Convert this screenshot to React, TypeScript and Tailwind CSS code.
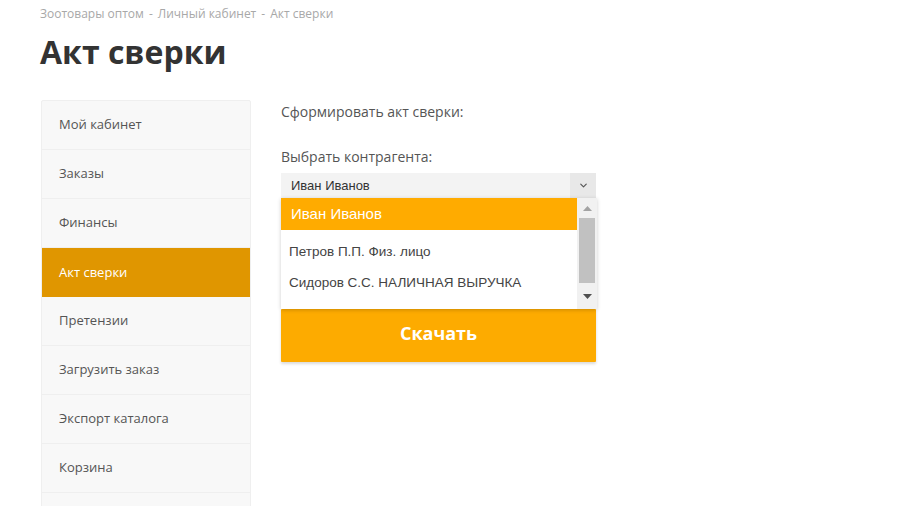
import { ChevronDown } from "lucide-react";

const menu = [
  "Мой кабинет",
  "Заказы",
  "Финансы",
  "Акт сверки",
  "Претензии",
  "Загрузить заказ",
  "Экспорт каталога",
  "Корзина",
  "",
];

const options = ["Петров П.П. Физ. лицо", "Сидоров С.С. НАЛИЧНАЯ ВЫРУЧКА"];

export default function App() {
  return (
    <main className="h-[506px] overflow-hidden bg-white font-['Open_Sans',sans-serif]">
      <div className="px-[40px]">
        {/* Breadcrumbs */}
        <div className="pt-[5px] text-[12px] leading-[18px] text-[#a8a8a8]">
          Зоотовары оптом<span className="mx-[5px]">-</span>Личный кабинет
          <span className="mx-[5px]">-</span>Акт сверки
        </div>
        <h1 className="mt-[9px] text-[32px] font-bold leading-[40px] text-[#333]">Акт сверки</h1>

        <div className="mt-[28px] flex gap-[30px]">
          {/* Sidebar */}
          <aside className="ml-[1px] w-[210px] shrink-0 rounded-[2px] border border-[#efefef] bg-[#f8f8f8]">
            {menu.map((item, i) =>
              item === "Акт сверки" ? (
                <div
                  key={i}
                  className="flex h-[49px] items-center bg-[#e09600] px-[17px] text-[13px] text-white"
                >
                  {item}
                </div>
              ) : (
                <div
                  key={i}
                  className="flex h-[49px] items-center border-b border-[#efefef] px-[17px] text-[13px] text-[#555]"
                >
                  {item}
                </div>
              )
            )}
          </aside>

          {/* Content */}
          <section className="w-[316px]">
            <p className="mt-[2px] text-[14px] leading-[20px] text-[#555]">Сформировать акт сверки:</p>
            <p className="mt-[25px] text-[14px] leading-[20px] text-[#555]">Выбрать контрагента:</p>

            <div className="relative mt-[6px]">
              <div className="flex h-[25px] w-[315px] items-center bg-[#f3f3f3] font-['Liberation_Sans',Arial,sans-serif] text-[13px] text-[#333]">
                <span className="flex-1 pl-[10px]">Иван Иванов</span>
                <span className="flex h-full w-[26px] items-center justify-center bg-[#e8e8e8] text-[#555]">
                  <ChevronDown size={11} strokeWidth={2.5} />
                </span>
              </div>

              <button className="mt-[111px] h-[53px] w-[315px] rounded-[1px] bg-[#fdab00] pb-[4px] text-[18px] font-bold text-white shadow-[0_2px_3px_rgba(0,0,0,0.15)]">
                Скачать
              </button>

              {/* Open dropdown list */}
              <div className="absolute left-0 top-[25px] flex h-[111px] w-[316px] bg-white font-['Liberation_Sans',Arial,sans-serif] shadow-[0_1px_4px_rgba(0,0,0,0.2)]">
                <div className="flex-1">
                  <div className="flex h-[32px] items-center bg-[#ffab00] pl-[10px] text-[15px] text-white">
                    Иван Иванов
                  </div>
                  <div className="pt-[7px]">
                    {options.map((o) => (
                      <div key={o} className="flex h-[31px] items-center pl-[8px] text-[13.5px] text-[#444]">
                        {o}
                      </div>
                    ))}
                  </div>
                </div>
                <div className="flex w-[20px] flex-col bg-[#f1f1f1]">
                  <div className="flex h-[20px] items-center justify-center">
                    <svg width="9" height="5" viewBox="0 0 9 5">
                      <path d="M0 5 L4.5 0 L9 5 Z" fill="#a3a3a3" />
                    </svg>
                  </div>
                  <div className="mx-[2px] h-[65px] bg-[#c1c1c1]" />
                  <div className="flex flex-1 items-center justify-center">
                    <svg width="9" height="5" viewBox="0 0 9 5">
                      <path d="M0 0 L9 0 L4.5 5 Z" fill="#505050" />
                    </svg>
                  </div>
                </div>
              </div>
            </div>
          </section>
        </div>
      </div>
    </main>
  );
}
